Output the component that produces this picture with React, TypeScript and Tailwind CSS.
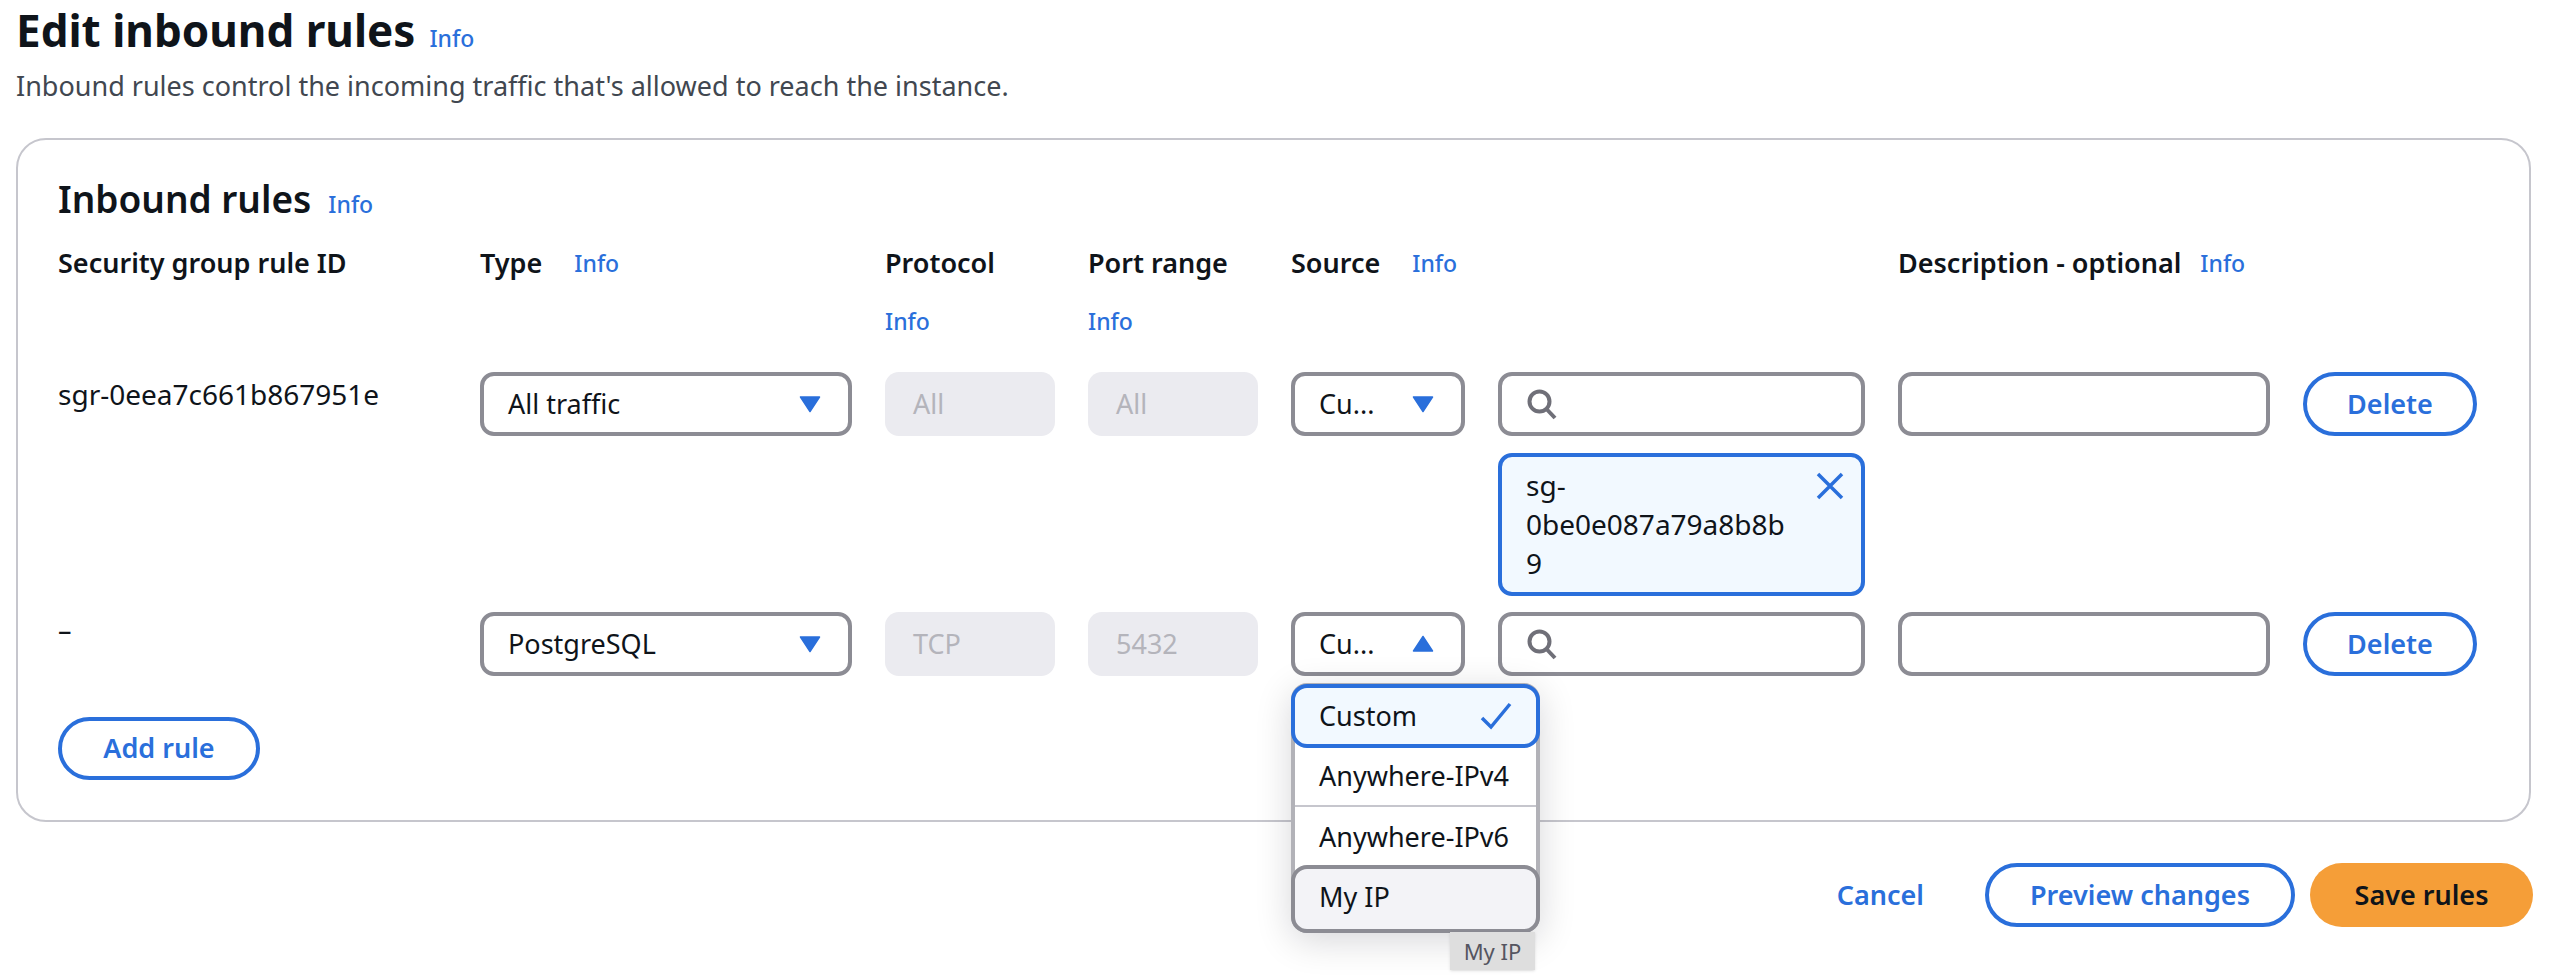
import React from "react";

const FONT = "font-['Noto_Sans','Liberation_Sans',sans-serif]";
const ROW = "grid grid-cols-[389px_372px_170px_170px_174px_367px_372px_174px] gap-x-[33px]";
const FIELD = "h-16 rounded-[14px] border-4 border-[#8c8c94] bg-white flex items-center";
const OUTLINE = "rounded-full border-4 border-[#2a6fdb] bg-white text-[#2a6fdb] font-semibold text-[27px] flex items-center justify-center";

const Info: React.FC<{ className?: string }> = ({ className = "" }) => (
  <a className={`text-[23px] leading-[30px] font-medium text-[#2a6fdb] ${className}`}>Info</a>
);

const Caret: React.FC<{ up?: boolean }> = ({ up }) => (
  <svg width="22" height="18" viewBox="0 0 22 18" className="shrink-0">
    <path
      d={up ? "M11 1.5 L20.5 16 H1.5 Z" : "M1.5 2 H20.5 L11 16.5 Z"}
      fill="#2a6fdb"
      stroke="#2a6fdb"
      strokeWidth="1.5"
      strokeLinejoin="round"
    />
  </svg>
);

const SearchIcon = () => (
  <svg width="32" height="32" viewBox="0 0 32 32" fill="none" stroke="#6f6f78" strokeWidth="4" className="shrink-0">
    <circle cx="13.5" cy="13.5" r="10" />
    <path d="M20.5 21 L29 30" />
  </svg>
);

const Select: React.FC<{ value: string; up?: boolean }> = ({ value, up }) => (
  <div className={`${FIELD} justify-between pl-6 pr-[27px] text-[27px] text-[#0f141a]`}>
    <span>{value}</span>
    <Caret up={up} />
  </div>
);

const Disabled: React.FC<{ value: string }> = ({ value }) => (
  <div className="h-16 rounded-[14px] bg-[#ebebf0] flex items-center pl-7 text-[27px] text-[#b4b4bb]">{value}</div>
);

const Search = () => (
  <div className={`${FIELD} pl-6`}>
    <SearchIcon />
  </div>
);

const SourceMenu = () => (
  <div className="absolute left-0 top-[71px] z-10 w-[249px] h-[250px] rounded-[16px] bg-white border-4 border-[#b2b2b8] shadow-[0_8px_36px_rgba(0,7,22,0.16)] text-[27px] text-[#0f141a]">
    <div className="absolute -left-1 -right-1 -top-[3px] h-16 rounded-[16px] border-4 border-[#2a6fdb] bg-[#f2f9ff] flex items-center justify-between pl-6 pr-6">
      <span>Custom</span>
      <svg width="32" height="28" viewBox="0 0 32 28" fill="none" stroke="#2a6fdb" strokeWidth="3.5">
        <path d="M2 16 L11 25 L30 2" />
      </svg>
    </div>
    <div className="mt-[60px] h-[60px] flex items-center pl-6 border-b-2 border-[#c6c6cd]">Anywhere-IPv4</div>
    <div className="h-[60px] flex items-center pl-6">Anywhere-IPv6</div>
    <div className="absolute -left-1 -right-1 -bottom-1 h-[68px] rounded-[16px] border-4 border-[#8c8c94] bg-[#f3f3f7] flex items-center pl-6 pb-1">
      My IP
    </div>
    <div className="absolute left-[155px] top-[245px] w-[85px] h-[38px] bg-[#dedede] shadow-sm flex items-center justify-center text-[22px] text-[#555560]">
      My IP
    </div>
  </div>
);

const App: React.FC = () => (
  <div className={`${FONT} w-[2550px] h-[980px] bg-white overflow-hidden pl-[16px] pt-[5px] text-[#0f141a]`}>
    <div className="flex items-baseline gap-[14px] h-[50px]">
      <h1 className="text-[44px] leading-[50px] font-bold">Edit inbound rules</h1>
      <Info />
    </div>
    <p className="mt-[16px] text-[27px] leading-[30px] text-[#414750]">
      Inbound rules control the incoming traffic that's allowed to reach the instance.
    </p>

    <section className="mt-[37px] w-[2515px] h-[684px] rounded-[30px] border-2 border-[#c6c6cd] pl-[40px] pt-[34px]">
      <div className="flex items-baseline gap-[17px] h-[50px]">
        <h2 className="text-[37px] leading-[50px] font-semibold">Inbound rules</h2>
        <Info />
      </div>

      <div className={`${ROW} mt-[22px] h-[100px] text-[27px] leading-[34px] font-semibold`}>
        <div>Security group rule ID</div>
        <div className="flex items-start gap-[32px]">
          <span>Type</span>
          <Info className="mt-0.5" />
        </div>
        <div>
          <div>Protocol</div>
          <Info className="block mt-[26px]" />
        </div>
        <div>
          <div>Port range</div>
          <Info className="block mt-[26px]" />
        </div>
        <div className="flex items-start gap-[32px] col-span-2">
          <span>Source</span>
          <Info className="mt-0.5" />
        </div>
        <div className="flex items-start gap-[19px] col-span-2">
          <span>Description - optional</span>
          <Info className="mt-0.5" />
        </div>
      </div>

      <div className={`${ROW} mt-[26px]`}>
        <div className="pt-[5px] text-[28px] leading-[34px]">sgr-0eea7c661b867951e</div>
        <Select value="All traffic" />
        <Disabled value="All" />
        <Disabled value="All" />
        <Select value="Cu..." />
        <div>
          <Search />
          <div className="relative mt-[17px] h-[143px] rounded-[14px] border-4 border-[#2a6fdb] bg-[#f2f9ff] pl-[24px] pt-[9px] text-[28px] leading-[39px] text-[#0f141a]">
            sg-
            <br />
            0be0e087a79a8b8b
            <br />
            9
            <svg width="30" height="30" viewBox="0 0 30 30" fill="none" stroke="#2a6fdb" strokeWidth="3.5" className="absolute right-[16px] top-[14px]">
              <path d="M3 3 L27 27 M27 3 L3 27" />
            </svg>
          </div>
        </div>
        <div className={FIELD} />
        <button className={`${OUTLINE} h-16`}>Delete</button>
      </div>

      <div className={`${ROW} mt-[16px]`}>
        <div className="pt-[1px] text-[27px] leading-[34px]">–</div>
        <Select value="PostgreSQL" />
        <Disabled value="TCP" />
        <Disabled value="5432" />
        <div className="relative">
          <Select value="Cu..." up />
          <SourceMenu />
        </div>
        <Search />
        <div className={FIELD} />
        <button className={`${OUTLINE} h-16`}>Delete</button>
      </div>

      <button className={`${OUTLINE} mt-[41px] w-[202px] h-[63px]`}>Add rule</button>
    </section>

    <div className="mt-[41px] w-[2517px] flex items-center justify-end text-[27px] font-semibold">
      <a className="text-[#2a6fdb] mr-[61px]">Cancel</a>
      <button className={`${OUTLINE} w-[310px] h-[64px] mr-[15px]`}>Preview changes</button>
      <button className="w-[223px] h-[64px] rounded-full bg-[#f59e38] text-[#0f141a] font-semibold text-[27px]">Save rules</button>
    </div>
  </div>
);

export default App;
